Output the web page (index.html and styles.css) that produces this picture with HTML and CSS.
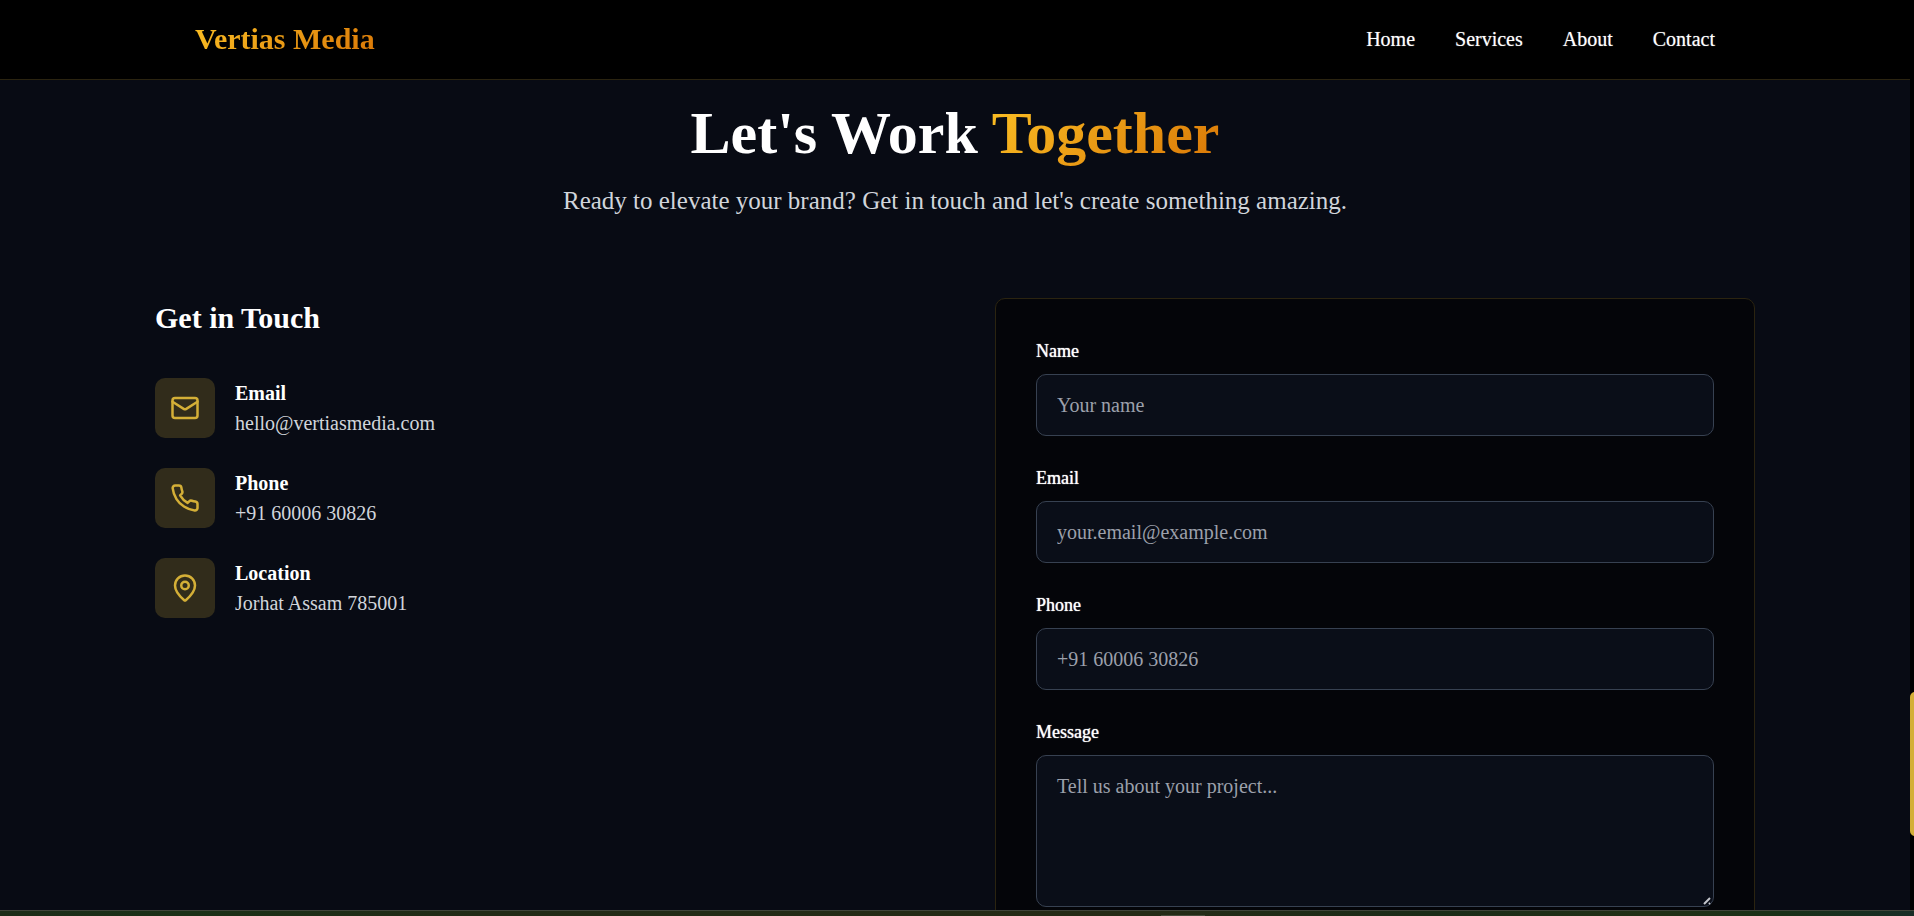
FILE: index.html
```html
<!DOCTYPE html>
<html lang="en">
<head>
<meta charset="utf-8">
<title>Vertias Media</title>
<meta name="viewport" content="width=device-width, initial-scale=1">
<link rel="stylesheet" href="styles.css">
</head>
<body>
<div class="page">
  <header class="header">
    <div class="header-inner">
      <a class="logo gold-text" href="#home">Vertias Media</a>
      <nav class="nav">
        <a href="#home">Home</a>
        <a href="#services">Services</a>
        <a href="#about">About</a>
        <a href="#contact">Contact</a>
      </nav>
    </div>
  </header>
  <main class="contact" id="contact">
    <div class="intro">
      <h1>Let's Work <span class="gold-text">Together</span></h1>
      <p>Ready to elevate your brand? Get in touch and let's create something amazing.</p>
    </div>
    <div class="columns">
      <section class="details">
        <h2>Get in Touch</h2>
        <ul class="detail-list">
          <li class="detail">
            <span class="detail-icon">
              <svg viewBox="0 0 24 24" aria-hidden="true"><rect x="2" y="4" width="20" height="16" rx="2"/><path d="m22 7-8.97 5.7a1.94 1.94 0 0 1-2.06 0L2 7"/></svg>
            </span>
            <div><h3>Email</h3><p>hello@vertiasmedia.com</p></div>
          </li>
          <li class="detail">
            <span class="detail-icon">
              <svg viewBox="0 0 24 24" aria-hidden="true"><path d="M22 16.92v3a2 2 0 0 1-2.18 2 19.79 19.79 0 0 1-8.63-3.07 19.5 19.5 0 0 1-6-6 19.79 19.79 0 0 1-3.07-8.67A2 2 0 0 1 4.11 2h3a2 2 0 0 1 2 1.72 12.84 12.84 0 0 0 .7 2.81 2 2 0 0 1-.45 2.11L8.09 9.91a16 16 0 0 0 6 6l1.27-1.27a2 2 0 0 1 2.11-.45 12.84 12.84 0 0 0 2.81.7A2 2 0 0 1 22 16.92z"/></svg>
            </span>
            <div><h3>Phone</h3><p>+91 60006 30826</p></div>
          </li>
          <li class="detail">
            <span class="detail-icon">
              <svg viewBox="0 0 24 24" aria-hidden="true"><path d="M20 10c0 4.993-5.539 10.193-7.399 11.799a1 1 0 0 1-1.202 0C9.539 20.193 4 14.993 4 10a8 8 0 0 1 16 0"/><circle cx="12" cy="10" r="3"/></svg>
            </span>
            <div><h3>Location</h3><p>Jorhat Assam 785001</p></div>
          </li>
        </ul>
      </section>
      <form class="card">
        <div class="field">
          <label for="name">Name</label>
          <input id="name" type="text" placeholder="Your name">
        </div>
        <div class="field">
          <label for="email">Email</label>
          <input id="email" type="email" placeholder="your.email@example.com">
        </div>
        <div class="field">
          <label for="phone">Phone</label>
          <input id="phone" type="tel" placeholder="+91 60006 30826">
        </div>
        <div class="field">
          <label for="message">Message</label>
          <textarea id="message" rows="5" placeholder="Tell us about your project..."></textarea>
        </div>
      </form>
    </div>
  </main>
</div>
<div class="scroll-track"><div class="scroll-thumb"></div></div>
<div class="dock"><span class="dock-mark"></span></div>
</body>
</html>
```
FILE: styles.css
```css
* {
  box-sizing: border-box;
  margin: 0;
  padding: 0;
}

body {
  height: 100vh;
  overflow: hidden;
  background: #080b14;
  color: #fff;
  font: 20px/30px "Liberation Serif", "Times New Roman", serif;
}

.page {
  margin-right: 4px;
}

.gold-text {
  background: linear-gradient(135deg, #fbbf24, #d97706);
  -webkit-background-clip: text;
  background-clip: text;
  color: transparent;
}

.header {
  background: #000;
  border-bottom: 1px solid #2b2410;
}

.header-inner {
  display: flex;
  align-items: center;
  justify-content: space-between;
  max-width: 1600px;
  margin: 0 auto;
  padding: 19px 40px 20px;
}

.logo {
  font-size: 30px;
  line-height: 40px;
  font-weight: 700;
  text-decoration: none;
}

.nav {
  display: flex;
  gap: 40px;
}

.nav a {
  color: #fff;
  font-weight: 500;
  text-decoration: none;
  text-shadow: 0 0 1px #888;
}

.contact {
  max-width: 1600px;
  margin: 0 auto;
  padding-top: 23px;
}

.intro {
  margin-bottom: 80px;
  text-align: center;
}

h1 {
  margin-bottom: 20px;
  font-size: 60px;
  line-height: 60px;
}

.intro p {
  color: #d1d5db;
  font-size: 25px;
  line-height: 35px;
}

.columns {
  display: grid;
  grid-template-columns: 1fr 1fr;
  gap: 80px;
}

h2 {
  margin-bottom: 40px;
  font-size: 30px;
  line-height: 40px;
}

.detail-list {
  display: grid;
  gap: 30px;
  list-style: none;
}

.detail {
  display: flex;
  gap: 20px;
}

.detail-icon {
  display: grid;
  place-items: center;
  width: 60px;
  height: 60px;
  border-radius: 10px;
  background: #312c1b;
}

.detail-icon svg {
  width: 30px;
  height: 30px;
  fill: none;
  stroke: #d4af37;
  stroke-width: 2;
  stroke-linecap: round;
  stroke-linejoin: round;
}

h3 {
  font-size: 20px;
  line-height: 30px;
}

.detail p {
  color: #d1d5db;
}

.card {
  display: grid;
  gap: 30px;
  padding: 40px;
  border: 1px solid #2b2410;
  border-radius: 10px;
  background: #040509;
}

.field {
  display: grid;
  gap: 10px;
}

label {
  font-size: 18px;
  line-height: 25px;
  font-weight: 500;
  text-shadow: 0 0 1px #fff;
}

input,
textarea {
  display: block;
  width: 100%;
  padding: 15px 20px;
  border: 1px solid #374151;
  border-radius: 10px;
  background: #0a0e18;
  color: #fff;
  font: inherit;
}

textarea {
  height: 152px;
  resize: vertical;
}

textarea::-webkit-resizer {
  background: url("data:image/svg+xml,%3Csvg xmlns='http://www.w3.org/2000/svg' width='15' height='15'%3E%3Cpath d='M6 13L12 7M11 13L12 12' stroke='%23c4c6cc' stroke-width='2'/%3E%3C/svg%3E") right bottom no-repeat;
}

::placeholder {
  color: #9ca0ab;
  opacity: 1;
}

.scroll-track {
  position: fixed;
  top: 0;
  right: 0;
  bottom: 0;
  width: 4px;
  overflow: hidden;
  background: #000;
}

.scroll-thumb {
  position: absolute;
  top: 692px;
  left: 0;
  width: 10px;
  height: 144px;
  border-radius: 5px;
  background: #d4af37;
}

.dock {
  position: fixed;
  left: 0;
  right: 0;
  bottom: 0;
  height: 6px;
  border-top: 1px solid #40453a;
  background: linear-gradient(90deg, #1c2c18 0%, #1b3017 10%, #222a16 25%, #252b16 60%, #1b2c18 75%, #223016 86%, #193017 93%, #182d26 100%);
}

.dock-mark {
  position: absolute;
  left: 1161px;
  bottom: 0;
  width: 44px;
  height: 1px;
  background: #454b3a;
}
```
